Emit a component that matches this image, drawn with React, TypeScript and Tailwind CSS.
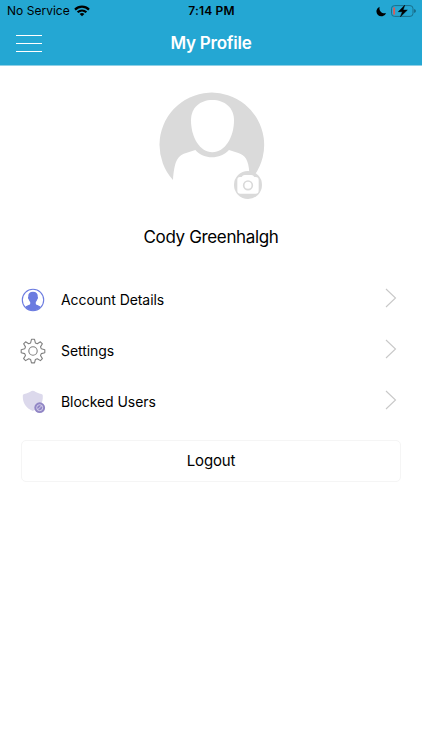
import type { ReactNode } from "react";

function StatusBar() {
  return (
    <div className="grid h-[22px] grid-cols-3 items-center pl-[7px] pr-[6px] text-black">
      <div className="flex items-center gap-[4px]">
        <span className="whitespace-nowrap text-[12px] leading-[22px] tracking-[0.02px]">No Service</span>
        <svg width="16" height="12" viewBox="0 0 16 12" fill="none" stroke="currentColor" strokeWidth="2.200">
          <path d="M1 4.6C5 .7 11 .7 15 4.6" />
          <path d="M3.6 7.3C6.2 4.9 9.8 4.9 12.4 7.3" />
          <path d="M8 11.3 5.6 8.9C7 7.7 9 7.7 10.4 8.9Z" fill="currentColor" stroke="none" />
        </svg>
      </div>
      <span className="text-center text-[12px] font-semibold leading-[22px] tracking-[0.2px]">7:14 PM</span>
      <div className="flex items-center justify-end gap-[4px]">
        <svg width="11" height="11" viewBox="0 0 11 11" fill="currentColor">
          <path d="M3.6.7C2.700 4.500 5.300 8 10.100 7.200A5 5 0 1 1 3.600.700Z" />
        </svg>
        <svg width="25" height="12" viewBox="0 0 25 12">
          <rect x=".5" y=".6" width="21.5" height="10.8" rx="3" fill="none" stroke="#17617a" strokeOpacity=".8" />
          <rect x="2.1" y="2.2" width="2" height="7.6" rx=".8" fill="#d0605f" />
          <path d="M23.2 4v4c1.2-.5 1.6-1.1 1.6-2S24.400 4.500 23.200 4Z" fill="#17617a" />
          <path d="M13.700.2 7.300 6.700h4.100L9.400 11.800l6.900-6.700h-4.200Z" fill="#000" stroke="#000" strokeWidth=".5" />
        </svg>
      </div>
    </div>
  );
}

function Avatar() {
  return (
    <svg className="ml-[2px]" width="125" height="120" viewBox="0 0 375 360">
      <path
        fill="#dadada"
        d="M69 285A157 157 0 1 1 314 270L298 263C296 225 285 210 265 204L237 195C209 224 162 224 136 195L106 205C80 213 73 234 69 285Z"
      />
      <path fill="#fff" d="M187 45C224 45 252 68 252 106C252 158 224 202 187 202C150 202 123 158 123 106C123 68 150 45 187 45Z" />
      <circle cx="294" cy="300" r="42" fill="#dadada" />
      <path
        fill="#fff"
        d="M270 276H275Q278 270 284 270H304Q310 270 313 276H317Q326 276 326 285V317Q326 326 317 326H271Q262 326 262 317V285Q262 276 270 276Z"
      />
      <circle cx="294" cy="301" r="13" fill="none" stroke="#dadada" strokeWidth="5" />
    </svg>
  );
}

function PersonIcon() {
  return (
    <svg width="24" height="24" viewBox="0 0 24 24">
      <circle cx="12" cy="12" r="10.700" fill="#fff" stroke="#6b7be0" strokeWidth="1.100" />
      <path
        fill="#6b7be0"
        d="M12 3.800c3.500 0 5 2 4.700 5 .6.500.2 2.300-.5 2.600-.3 1.100-.8 1.900-1.400 2.500v2c.6 1.300 3.800 1.300 5 3.100A10.700 10.700 0 0 1 4.200 19c1.200-1.800 4.400-1.800 5-3.100v-2c-.6-.6-1.100-1.400-1.400-2.500-.7-.3-1.100-2.100-.5-2.600-.3-3 1.200-5 4.700-5Z"
      />
    </svg>
  );
}

function GearIcon() {
  return (
    <svg width="26" height="26" viewBox="0 0 26 26" fill="none" stroke="#808080" strokeWidth="1.100" strokeLinejoin="round">
      <path d="M10.600 4.900 11.500 1.300h3l.9 3.600 1.900.8 3.100-1.900 2 2-1.900 3.100.8 1.900 3.500.9v3l-3.500.9-.8 1.900 1.900 3.100-2 2-3.100-1.900-1.900.8-.9 3.400h-3l-.9-3.400-1.900-.8-3.100 1.900-2-2 1.900-3.100-.8-1.900-3.500-.9v-3l3.500-.9.8-1.900-1.900-3.100 2-2 3.100 1.900Z" />
      <circle cx="13" cy="13" r="4.200" />
    </svg>
  );
}

function ShieldIcon() {
  return (
    <svg className="ml-[3px] shrink-0" width="25" height="24" viewBox="0 0 25 24" fill="none">
      <path
        d="M9.500 1.100Q10.800.300 12.100 1.100C14.300 2.700 16.500 3.400 19.300 3.900Q20.700 4.200 20.800 5.600C21.200 13 17.800 18.400 10.800 21C4 18.400.5 13 .8 5.600Q.9 4.200 2.300 3.900C5.100 3.400 7.300 2.700 9.500 1.100Z"
        fill="#dcd9ec"
      />
      <circle cx="17.700" cy="17.700" r="5.400" fill="#9186c5" />
      <circle cx="17.700" cy="17.700" r="3" stroke="#d5d0eb" strokeWidth="1" />
      <path d="m15.600 19.800 4.200-4.200" stroke="#d5d0eb" strokeWidth="1" />
    </svg>
  );
}

function MenuRow({ icon, label }: { icon: ReactNode; label: string }) {
  return (
    <button className="flex h-[51px] w-full items-center pl-5 pr-[25px] text-left">
      <span className="flex w-[26px] justify-center">{icon}</span>
      <span className="ml-[15px] flex-1 text-[14px] leading-5 tracking-[-0.06px]">{label}</span>
      <svg className="mb-[3px]" width="12" height="20" viewBox="0 0 12 20" fill="none" stroke="#c8c8c8" strokeWidth="1.100">
        <path d="m1 1 9.500 9L1 19" />
      </svg>
    </button>
  );
}

export default function App() {
  return (
    <div className="flex h-[750px] w-full flex-col bg-white font-['Inter','Liberation_Sans',sans-serif] text-black">
      <header className="h-[66px] border-b border-[#8fd0e6] bg-[#24a7d3]">
        <StatusBar />
        <div className="grid h-[43px] grid-cols-[80px_1fr_80px] items-center">
          <button className="ml-[16px] flex w-[26px] flex-col gap-[7px]">
            <span className="h-px w-full bg-white" />
            <span className="h-px w-full bg-white" />
            <span className="h-px w-full bg-white" />
          </button>
          <h1 className="text-center text-[17px] font-semibold tracking-[-0.25px] text-white">My Profile</h1>
        </div>
      </header>
      <main className="flex flex-col">
        <section className="flex flex-col items-center pt-[19px]">
          <Avatar />
          <h2 className="mt-[20px] text-[17px] leading-6 tracking-[-0.35px]">Cody Greenhalgh</h2>
        </section>
        <nav className="mt-[25px] flex flex-col">
          <MenuRow icon={<PersonIcon />} label="Account Details" />
          <MenuRow icon={<GearIcon />} label="Settings" />
          <MenuRow icon={<ShieldIcon />} label="Blocked Users" />
        </nav>
        <button className="mx-[21px] mt-[13px] h-[42px] rounded-[5px] border border-[#f5f5f5] pt-px text-[15px] tracking-[-0.15px]">Logout</button>
      </main>
    </div>
  );
}
